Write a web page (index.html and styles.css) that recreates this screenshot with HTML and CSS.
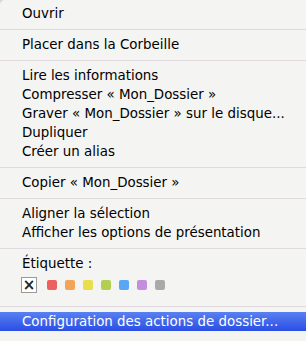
FILE: index.html
```html
<!DOCTYPE html>
<html lang="fr">
<head>
	<meta charset="UTF-8">
	<title>Menu contextuel</title>
	<link rel="stylesheet" href="styles.css">
</head>
<body>
	<div class="menu">
		<ul>
			<li>Ouvrir</li>
			<li class="sep"></li>
			<li>Placer dans la Corbeille</li>
			<li class="sep"></li>
			<li>Lire les informations</li>
			<li>Compresser « Mon_Dossier »</li>
			<li>Graver « Mon_Dossier » sur le disque...</li>
			<li>Dupliquer</li>
			<li>Créer un alias</li>
			<li class="sep"></li>
			<li>Copier « Mon_Dossier »</li>
			<li class="sep"></li>
			<li>Aligner la sélection</li>
			<li>Afficher les options de présentation</li>
			<li class="sep"></li>
			<li>Étiquette :</li>
			<li class="labels">
				<span class="none">×</span>
				<span class="dot red"></span>
				<span class="dot orange"></span>
				<span class="dot yellow"></span>
				<span class="dot green"></span>
				<span class="dot blue"></span>
				<span class="dot purple"></span>
				<span class="dot gray"></span>
			</li>
			<li class="sep"></li>
			<li class="current">Configuration des actions de dossier...</li>
		</ul>
	</div>
</body>
</html>
```

FILE: styles.css
```css
* {
	padding: 0;
	margin: 0;
}
html {
	background: #d5dae2;
}
body {
	font-family: "DejaVu Sans", "Liberation Sans", sans-serif;
	font-size: 13.4px;
	color: #000;
}
.menu {
	width: 306px;
	height: 341px;
	background: #f4f4f2;
	border-top-left-radius: 5px;
	overflow: hidden;
}
.menu ul {
	list-style: none;
	padding-top: 4px;
}
.menu li {
	height: 19px;
	line-height: 19px;
	padding-left: 22px;
	white-space: nowrap;
}
.menu li.sep {
	height: 1px;
	padding: 0;
	margin: 6px 0 5px;
	background: #e0dadf;
}
.labels {
	display: flex;
	align-items: center;
	gap: 8px;
	margin: 4px 0 13px;
}
.menu li.labels {
	height: 16px;
	padding-left: 21px;
}
.none {
	width: 14px;
	height: 14px;
	border: 1px solid #9a9a9a;
	background: #fff;
	margin-right: 2px;
	font-size: 15px;
	font-weight: bold;
	line-height: 14px;
	text-align: center;
	color: #222;
}
.dot {
	width: 10px;
	height: 10px;
	border-radius: 2px;
}
.red { background: #ee5f5f; }
.orange { background: #f3a455; }
.yellow { background: #e9de4c; }
.green { background: #b3cf52; }
.blue { background: #58a6f4; }
.purple { background: #c18fdd; }
.gray { background: #a9a9a9; }
.menu li.current {
	background: linear-gradient(#5a80f2, #2a4ee4);
	color: #fff;
}
```
